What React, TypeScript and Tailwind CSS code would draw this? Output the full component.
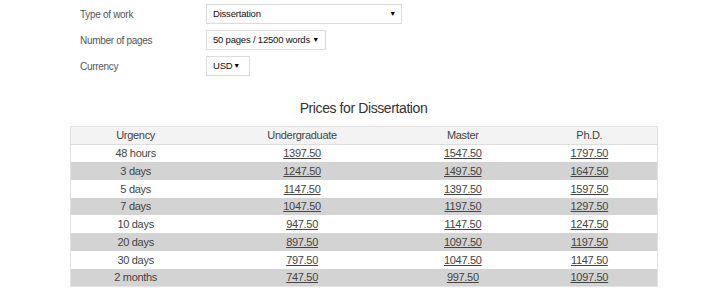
import React from 'react';

// rows: urgency, undergraduate, master, phd
const rows: [string, string, string, string][] = [
    ['48 hours', '1397.50', '1547.50', '1797.50'],
    ['3 days', '1247.50', '1497.50', '1647.50'],
    ['5 days', '1147.50', '1397.50', '1597.50'],
    ['7 days', '1047.50', '1197.50', '1297.50'],
    ['10 days', '947.50', '1147.50', '1247.50'],
    ['20 days', '897.50', '1097.50', '1197.50'],
    ['30 days', '797.50', '1047.50', '1147.50'],
    ['2 months', '747.50', '997.50', '1097.50'],
];

function FakeSelect({ value, width, pr }: { value: string; width: string; pr: string }) {
    return (
        <div className={`${width} ${pr} h-[20px] border border-[#dcdcdc] bg-white flex items-center justify-between pl-[6px] text-[9.5px] tracking-[-0.2px] text-[#111] whitespace-nowrap`}>
            <span>{value}</span>
            <span className="text-[7px] text-black">▼</span>
        </div>
    );
}

export default function App() {
    const labelClass = "w-[126px] text-[10px] tracking-[-0.3px] text-[#555]";
    return (
        <div className="w-[713px] h-[294px] bg-white overflow-hidden font-['Liberation_Sans',Arial,sans-serif]">
            <div className="flex flex-col gap-[6px] pt-[4px] pl-[80px]">
                <div className="flex items-center">
                    <span className={labelClass}>Type of work</span>
                    <FakeSelect value="Dissertation" width="w-[196px]" pr="pr-[5px]" />
                </div>
                <div className="flex items-center">
                    <span className={labelClass}>Number of pages</span>
                    <FakeSelect value="50 pages / 12500 words" width="w-[120px]" pr="pr-[6px]" />
                </div>
                <div className="flex items-center">
                    <span className={labelClass}>Currency</span>
                    <FakeSelect value="USD" width="w-[44px]" pr="pr-[9px]" />
                </div>
            </div>

            <h2 className="text-center text-[14px] tracking-[-0.4px] text-[#333] mt-[22px] mb-[8px] pl-[14px] leading-[20px]">Prices for Dissertation</h2>

            <table className="ml-[70px] w-[588px] border-collapse border border-[#e2e2e2] text-[11px] tracking-[-0.3px] text-[#444] text-center">
                <thead>
                    <tr className="bg-[#f3f3f3] h-[17.8px] border-b border-[#dedede]">
                        <th className="font-normal w-[130px]">Urgency</th>
                        <th className="font-normal w-[204px]">Undergraduate</th>
                        <th className="font-normal w-[118px]">Master</th>
                        <th className="font-normal w-[136px]">Ph.D.</th>
                    </tr>
                </thead>
                <tbody>
                    {rows.map((r, i) => (
                        <tr key={r[0]} className={`h-[17.8px] ${i % 2 === 1 ? 'bg-[#d3d3d3]' : 'bg-white'}`}>
                            <td>{r[0]}</td>
                            <td><a className="underline text-[#444]">{r[1]}</a></td>
                            <td><a className="underline text-[#444]">{r[2]}</a></td>
                            <td><a className="underline text-[#444]">{r[3]}</a></td>
                        </tr>
                    ))}
                </tbody>
            </table>
        </div>
    );
}
